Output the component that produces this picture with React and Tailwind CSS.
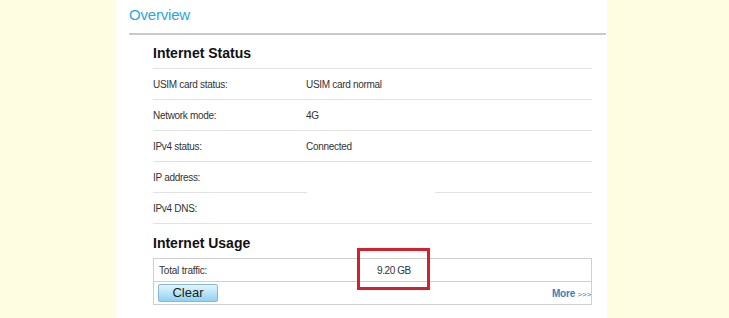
export default function App() {
  const rows = [
    { label: "USIM card status:", value: "USIM card normal" },
    { label: "Network mode:", value: "4G" },
    { label: "IPv4 status:", value: "Connected" },
    { label: "IP address:", value: "", split: true },
    { label: "IPv4 DNS:", value: "" },
  ];

  return (
    <div
      className="flex h-[318px] w-full overflow-hidden bg-[#fffde1] text-[#333]"
      style={{ fontFamily: '"Liberation Sans", Arial, sans-serif' }}
    >
      <div className="ml-[116px] h-full w-[491px] bg-white">
        <div className="ml-[13px] mr-[1px] h-[35px] border-b-2 border-[#c9c9c9] pt-[4px]">
          <h1 className="text-[15px] leading-[22px] tracking-[-0.2px] text-[#2ca7dc]">Overview</h1>
        </div>

        <div className="ml-[37px] mr-[15px]">
          <h2 className="border-b border-[#e2e2e2] pt-[9px] pb-[6px] text-[14px] leading-[18px] font-bold text-[#111]">
            Internet Status
          </h2>

          {rows.map((row) => (
            <StatusRow key={row.label} {...row} />
          ))}

          <h2 className="pt-[10px] pb-[6px] text-[14px] leading-[18px] font-bold text-[#111]">
            Internet Usage
          </h2>

          <div className="relative border border-[#cfcfcf]">
            <div className="flex h-[23px] items-center border-b border-[#cfcfcf] text-[10px] tracking-[-0.2px]">
              <span className="w-[223px] pl-[5px]">Total traffic:</span>
              <span className="tracking-[-0.4px]">9.20 GB</span>
            </div>
            <div className="flex h-[22px] items-center justify-between pr-[0px] pl-[4px]">
              <button
                type="button"
                className="h-[18px] w-[60px] rounded-[2px] border border-[#86b9d6] bg-gradient-to-b from-[#e2f4fc] to-[#8fd2f0] text-[13px] leading-[16px] text-[#1a1a1a]"
              >
                Clear
              </button>
              <a className="text-[10px] font-bold tracking-[-0.2px] text-[#3d7cb9]">
                More <span className="text-[8px] font-normal">&gt;&gt;&gt;</span>
              </a>
            </div>

            <div className="absolute top-[-11px] left-[203px] h-[42px] w-[73px] border-[3px] border-[#d3202f]" />
          </div>
        </div>
      </div>
    </div>
  );
}

function StatusRow({ label, value, split = false }) {
  if (split) {
    return (
      <div className="flex h-[31px] text-[10px] tracking-[-0.3px]">
        <div className="flex w-[154px] items-center border-b border-[#e2e2e2]">{label}</div>
        <div className="w-[128px]" />
        <div className="flex-1 border-b border-[#e2e2e2]" />
      </div>
    );
  }

  return (
    <div className="flex h-[31px] items-center border-b border-[#e2e2e2] text-[10px] tracking-[-0.3px]">
      <span className="w-[153px]">{label}</span>
      <span>{value}</span>
    </div>
  );
}
